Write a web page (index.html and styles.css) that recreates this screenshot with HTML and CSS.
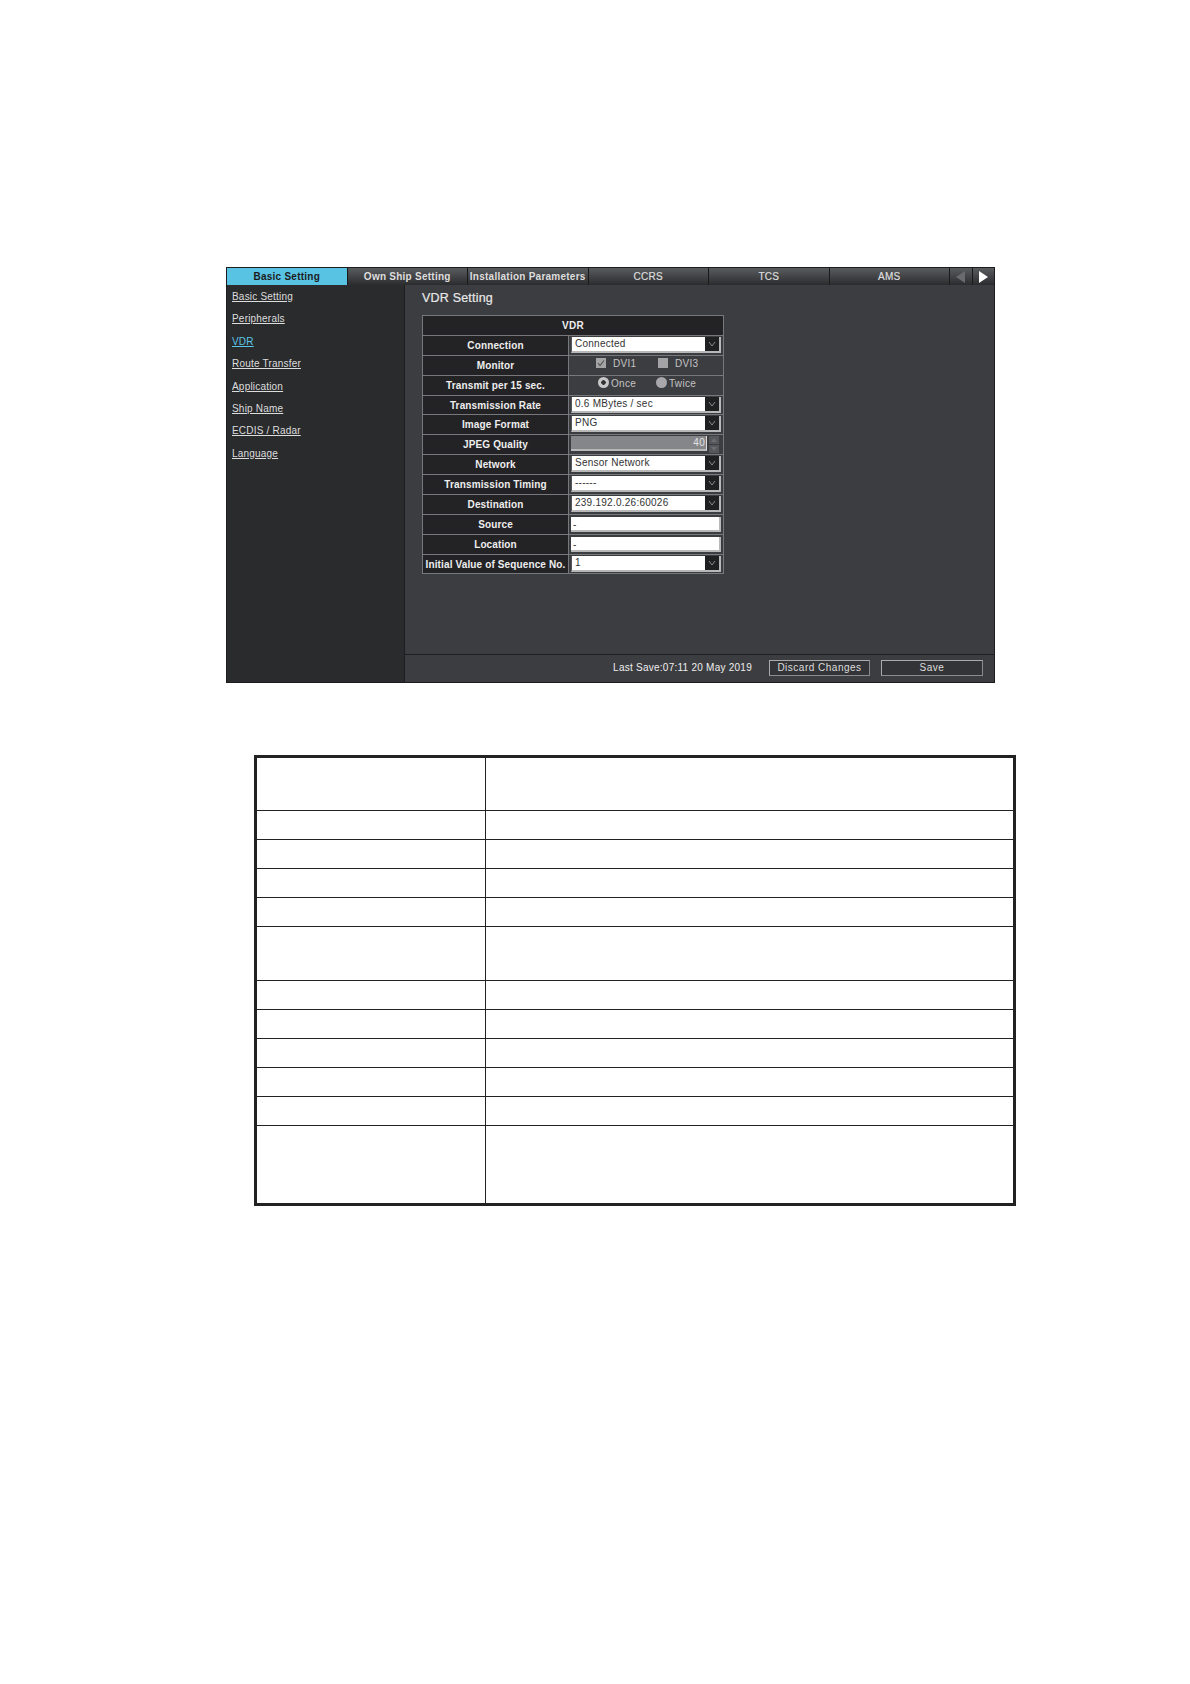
FILE: index.html
```html
<!doctype html>
<html lang="en">
 <head>
  <meta charset="UTF-8">
  <title>VDR Setting</title>
  <link rel="stylesheet" href="styles.css">
 </head>
 <body>
  <div class="panel">
   <div class="tabs">
    <div class="tab active">Basic Setting</div>
    <div class="tab">Own Ship Setting</div>
    <div class="tab">Installation Parameters</div>
    <div class="tab plain">CCRS</div>
    <div class="tab plain">TCS</div>
    <div class="tab plain">AMS</div>
    <div class="tab-arrow dim"><svg width="11" height="12" viewBox="0 0 11 12"><path d="M10 0V12L1 6Z"/></svg></div>
    <div class="tab-arrow"><svg width="11" height="12" viewBox="0 0 11 12"><path d="M1 0V12L10 6Z"/></svg></div>
   </div>
   <div class="body">
    <div class="sidebar">
     <a>Basic Setting</a>
     <a>Peripherals</a>
     <a class="current">VDR</a>
     <a>Route Transfer</a>
     <a>Application</a>
     <a>Ship Name</a>
     <a>ECDIS / Radar</a>
     <a>Language</a>
    </div>
    <div class="main">
     <div class="content">
      <h2>VDR Setting</h2>
      <div class="vdr">
       <div class="vdr-head">VDR</div>
       <div class="row">
        <div class="label">Connection</div>
        <div class="value"><div class="select">Connected<span class="drop"><svg width="8" height="8" viewBox="0 0 8 8"><path d="M1 2L4 6L7 2"/></svg></span></div></div>
       </div>
       <div class="row">
        <div class="label">Monitor</div>
        <div class="value choices">
         <span class="choice check"><span class="box"><svg width="10" height="10" viewBox="0 0 10 10"><path d="M2 5L4 7.5L8 2.5"/></svg></span>DVI1</span>
         <span class="choice check"><span class="box"></span>DVI3</span>
        </div>
       </div>
       <div class="row">
        <div class="label">Transmit per 15 sec.</div>
        <div class="value choices">
         <span class="choice radio"><span class="dot on"></span>Once</span>
         <span class="choice radio"><span class="dot"></span>Twice</span>
        </div>
       </div>
       <div class="row short">
        <div class="label">Transmission Rate</div>
        <div class="value"><div class="select">0.6 MBytes / sec<span class="drop"><svg width="8" height="8" viewBox="0 0 8 8"><path d="M1 2L4 6L7 2"/></svg></span></div></div>
       </div>
       <div class="row">
        <div class="label">Image Format</div>
        <div class="value"><div class="select">PNG<span class="drop"><svg width="8" height="8" viewBox="0 0 8 8"><path d="M1 2L4 6L7 2"/></svg></span></div></div>
       </div>
       <div class="row">
        <div class="label">JPEG Quality</div>
        <div class="value spin-wrap">
         <div class="spin-field">40</div>
         <div class="spin">
          <span><svg width="6" height="4" viewBox="0 0 6 4"><path d="M3 0L6 4H0Z"/></svg></span>
          <span><svg width="6" height="4" viewBox="0 0 6 4"><path d="M0 0H6L3 4Z"/></svg></span>
         </div>
        </div>
       </div>
       <div class="row">
        <div class="label">Network</div>
        <div class="value"><div class="select">Sensor Network<span class="drop"><svg width="8" height="8" viewBox="0 0 8 8"><path d="M1 2L4 6L7 2"/></svg></span></div></div>
       </div>
       <div class="row">
        <div class="label">Transmission Timing</div>
        <div class="value"><div class="select">------<span class="drop"><svg width="8" height="8" viewBox="0 0 8 8"><path d="M1 2L4 6L7 2"/></svg></span></div></div>
       </div>
       <div class="row">
        <div class="label">Destination</div>
        <div class="value"><div class="select">239.192.0.26:60026<span class="drop"><svg width="8" height="8" viewBox="0 0 8 8"><path d="M1 2L4 6L7 2"/></svg></span></div></div>
       </div>
       <div class="row">
        <div class="label">Source</div>
        <div class="value"><div class="field">-</div></div>
       </div>
       <div class="row">
        <div class="label">Location</div>
        <div class="value"><div class="field">-</div></div>
       </div>
       <div class="row">
        <div class="label">Initial Value of Sequence No.</div>
        <div class="value"><div class="select">1<span class="drop"><svg width="8" height="8" viewBox="0 0 8 8"><path d="M1 2L4 6L7 2"/></svg></span></div></div>
       </div>
      </div>
     </div>
     <div class="footer">
      <span class="last-save">Last Save:07:11 20 May 2019</span>
      <button class="btn discard">Discard Changes</button>
      <button class="btn save">Save</button>
     </div>
    </div>
   </div>
  </div>

  <table class="blank">
   <tr class="h2"><td></td><td></td></tr>
   <tr><td></td><td></td></tr>
   <tr><td></td><td></td></tr>
   <tr><td></td><td></td></tr>
   <tr><td></td><td></td></tr>
   <tr class="h2"><td></td><td></td></tr>
   <tr><td></td><td></td></tr>
   <tr><td></td><td></td></tr>
   <tr><td></td><td></td></tr>
   <tr><td></td><td></td></tr>
   <tr><td></td><td></td></tr>
   <tr class="h3"><td></td><td></td></tr>
  </table>
 </body>
</html>
```

FILE: styles.css
```css
* {
  box-sizing: border-box;
}

body {
  margin: 0;
  background: #fff;
  font-family: "Liberation Sans", Arial, sans-serif;
  padding: 267px 0 0 226px;
  min-height: 1684px;
}

.panel {
  width: 769px;
  height: 416px;
  background: #3c3d41;
  border: 1px solid #1c1c1e;
  display: flex;
  flex-direction: column;
  color: #e8e8e8;
}

.tabs {
  display: flex;
  height: 17px;
  flex: none;
  background: linear-gradient(#5a5b5e, #2b2c2e);
}

.tab {
  width: 120.5px;
  border-right: 1px solid #1a1a1a;
  text-align: center;
  font-size: 10px;
  font-weight: bold;
  line-height: 17px;
  letter-spacing: 0.25px;
  color: #ddd;
  white-space: nowrap;
}

.tab.plain {
  font-weight: normal;
  -webkit-text-stroke: 0.2px #ddd;
}

.tab.active {
  background: #59c3e4;
  color: #1c1c1c;
}

.tab-arrow {
  width: 22px;
  flex: 1;
  border-right: 1px solid #1a1a1a;
  display: flex;
  align-items: center;
  justify-content: center;
}

.tab-arrow:last-child {
  border-right: none;
}

.tab-arrow path {
  fill: #fff;
}

.tab-arrow.dim path {
  fill: #6a6b6e;
}

.body {
  flex: 1;
  display: flex;
  min-height: 0;
}

.sidebar {
  width: 178px;
  background: #2a2b2d;
  border-right: 1px solid #1e1e20;
  padding: 5px 0 0 5px;
  display: flex;
  flex-direction: column;
  flex: none;
}

.sidebar a {
  height: 22.4px;
  font-size: 10px;
  line-height: 14px;
  letter-spacing: 0.2px;
  color: #ddd;
  text-decoration: underline;
}

.sidebar a.current {
  color: #5cc4e6;
}

.main {
  flex: 1;
  display: flex;
  flex-direction: column;
}

.content {
  flex: 1;
  padding: 5px 0 0 17px;
}

h2 {
  margin: 0 0 9px;
  font-size: 12.5px;
  font-weight: normal;
  line-height: 16px;
  letter-spacing: 0.2px;
  -webkit-text-stroke: 0.2px #e8e8e8;
}

.vdr {
  width: 302px;
  border: 1px solid #77787b;
}

.vdr-head {
  height: 20px;
  background: #232325;
  border-bottom: 1px solid #77787b;
  text-align: center;
  font-size: 10px;
  font-weight: bold;
  line-height: 19px;
  color: #eee;
  letter-spacing: 0.3px;
}

.row {
  display: flex;
  height: 20px;
  border-bottom: 1px solid #77787b;
}

.row.short {
  height: 19px;
}

.row:last-child {
  height: 18px;
  border-bottom: none;
}

.label {
  width: 146px;
  background: #232325;
  border-right: 1px solid #77787b;
  text-align: center;
  font-size: 10px;
  font-weight: bold;
  line-height: 19px;
  letter-spacing: 0.13px;
  color: #eee;
  white-space: nowrap;
}

.value {
  flex: 1;
  padding: 1px 2px 0 2px;
}

.select,
.field {
  position: relative;
  height: 16px;
  background: #fff;
  border-bottom: 2px solid #b8b8b8;
  border-right: 2px solid #b8b8b8;
  font-size: 10px;
  line-height: 14px;
  padding-left: 3px;
  letter-spacing: 0.25px;
  color: #333;
}

.select {
  border-left: 1px solid #55565a;
}

.field {
  height: 15px;
  margin-top: 1px;
  padding-left: 2px;
  line-height: 15px;
}

.drop {
  position: absolute;
  right: 0;
  top: 0;
  width: 14px;
  height: 14px;
  background: #1f2022;
  display: flex;
  align-items: center;
  justify-content: center;
}

.drop path {
  fill: none;
  stroke: #8a8a8a;
  stroke-width: 1;
}

.choices {
  display: flex;
  padding: 0;
  font-size: 10px;
  color: #c4c4c4;
  letter-spacing: 0.3px;
}

.choice {
  display: flex;
  align-items: center;
  line-height: 14px;
  height: 15px;
}

.check {
  width: 62px;
}

.check:first-child {
  margin-left: 27px;
}

.box {
  width: 10px;
  height: 10px;
  background: #a4a4a6;
  margin-right: 7px;
  margin-top: -1px;
}

.box path {
  fill: none;
  stroke: #555;
  stroke-width: 1.2;
}

.radio {
  width: 58px;
}

.radio:first-child {
  margin-left: 29px;
}

.dot {
  width: 11px;
  height: 11px;
  border-radius: 50%;
  background: #a8a8aa;
  margin-right: 2px;
  margin-top: -2px;
}

.dot.on {
  background: radial-gradient(circle, #333 0 2px, #c8c8c8 2.5px);
}

.spin-wrap {
  display: flex;
  gap: 2px;
}

.spin-field {
  width: 136px;
  height: 15px;
  background: #85868a;
  border-bottom: 2px solid #b8b8b8;
  border-right: 1px solid #ddd;
  font-size: 10px;
  line-height: 14px;
  text-align: right;
  padding-right: 1px;
  letter-spacing: 0.3px;
  color: #e4e4e4;
}

.spin {
  width: 10px;
  display: flex;
  flex-direction: column;
  gap: 1px;
}

.spin span {
  height: 8px;
  background: #56575a;
  display: flex;
  align-items: center;
  justify-content: center;
}

.spin path {
  fill: #6c6d70;
}

.footer {
  height: 28px;
  flex: none;
  border-top: 1px solid #1e1e20;
  display: flex;
  align-items: center;
  padding: 0 11px 2px 0;
  font-size: 10px;
  letter-spacing: 0.25px;
}

.last-save {
  margin-left: auto;
  margin-right: 17px;
  color: #eee;
}

.btn {
  height: 16px;
  padding: 0;
  background: #333437;
  border: 1px solid #8a8b8e;
  border-top-color: #aaa;
  border-left-color: #aaa;
  color: #ddd;
  font-family: inherit;
  font-size: 10px;
  letter-spacing: 0.5px;
  line-height: 12px;
}

.discard {
  width: 101px;
  margin-right: 11px;
}

.save {
  width: 102px;
}

.blank {
  margin-top: 72px;
  margin-left: 28px;
  width: 762px;
  height: 450px;
  border-collapse: collapse;
  border: 3px solid #222;
  table-layout: fixed;
}

.blank td {
  height: 29px;
  padding: 0;
  border: 1px solid #222;
}

.blank td:first-child {
  width: 230px;
}

.blank .h2 td {
  height: 54px;
}

.blank .h3 td {
  height: 79px;
}
```
